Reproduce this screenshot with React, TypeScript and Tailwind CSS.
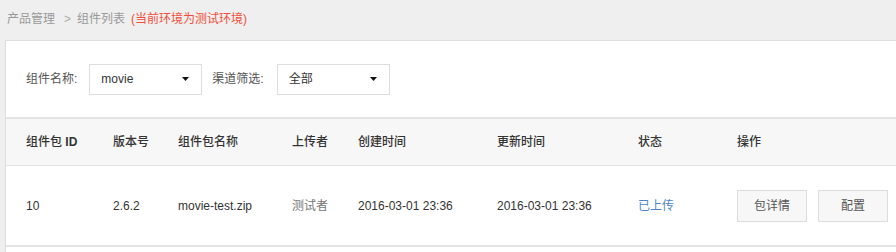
import React from 'react';

const font = { fontFamily: '"Liberation Sans", "Noto Sans CJK SC", sans-serif' };

const cols = [
  { title: '组件包 ID', w: 'w-[87px]' },
  { title: '版本号', w: 'w-[65px]' },
  { title: '组件包名称', w: 'w-[114px]' },
  { title: '上传者', w: 'w-[66px]' },
  { title: '创建时间', w: 'w-[139px]' },
  { title: '更新时间', w: 'w-[141px]' },
  { title: '状态', w: 'w-[99px]' },
  { title: '操作', w: 'flex-1' },
];

function Select({ value }: { value: string }) {
  return (
    <div className="flex h-[31px] w-[113px] items-center justify-between border border-[#dddddd] bg-white pl-[11px] pr-[12px] text-[12px] text-[#333]">
      <span>{value}</span>
      <svg width="7" height="4" viewBox="0 0 7 4">
        <path d="M0 0h7L3.5 4z" fill="#111" />
      </svg>
    </div>
  );
}

export default function App() {
  return (
    <div className="h-[252px] w-[896px] overflow-hidden bg-[#efefef]" style={font}>
      <div className="flex h-[40px] items-center pl-[7px] pb-[3px] text-[12px]">
        <span className="text-[#999]">产品管理</span>
        <span className="ml-[9px] mr-[6px] text-[#aaa]">&gt;</span>
        <span className="text-[#999]">组件列表</span>
        <span className="ml-[6px] text-[#f24e3a]">(当前环境为测试环境)</span>
      </div>
      <div className="ml-[5px] border-l border-t border-[#dddddd] bg-white">
        <div className="flex h-[78px] items-center border-b-2 border-[#e3e3e3] pl-[20px] text-[12px] text-[#555]">
          <span className="mr-[12px]">组件名称:</span>
          <Select value="movie" />
          <span className="ml-[10px] mr-[13px]">渠道筛选:</span>
          <Select value="全部" />
        </div>
        <div className="flex h-[47px] items-center border-b border-[#e3e3e3] bg-[#f7f7f7] pl-[20px] text-[12px] font-medium text-[#333]">
          {cols.map(c => (
            <div key={c.title} className={c.w}>
              {c.title === '组件包 ID' ? (
                <span>组件包 <span className="font-bold">ID</span></span>
              ) : c.title}
            </div>
          ))}
        </div>
        <div className="flex h-[81px] items-center border-b-2 border-[#e3e3e3] pl-[20px] text-[12px] text-[#333]">
          <div className="w-[87px]">10</div>
          <div className="w-[65px]">2.6.2</div>
          <div className="w-[114px]">movie-test.zip</div>
          <div className="w-[66px] text-[#777]">测试者</div>
          <div className="w-[139px]">2016-03-01 23:36</div>
          <div className="w-[141px]">2016-03-01 23:36</div>
          <div className="w-[99px] text-[#4d86c8]">已上传</div>
          <div className="flex flex-1 gap-[11px]">
            <button className="flex h-[32px] w-[70px] items-center justify-center border border-[#dddddd] bg-[#f7f7f7] text-[12px] text-[#555]">包详情</button>
            <button className="flex h-[32px] w-[70px] items-center justify-center border border-[#dddddd] bg-[#f7f7f7] text-[12px] text-[#555]">配置</button>
          </div>
        </div>
        <div className="h-[10px]" />
      </div>
    </div>
  );
}
